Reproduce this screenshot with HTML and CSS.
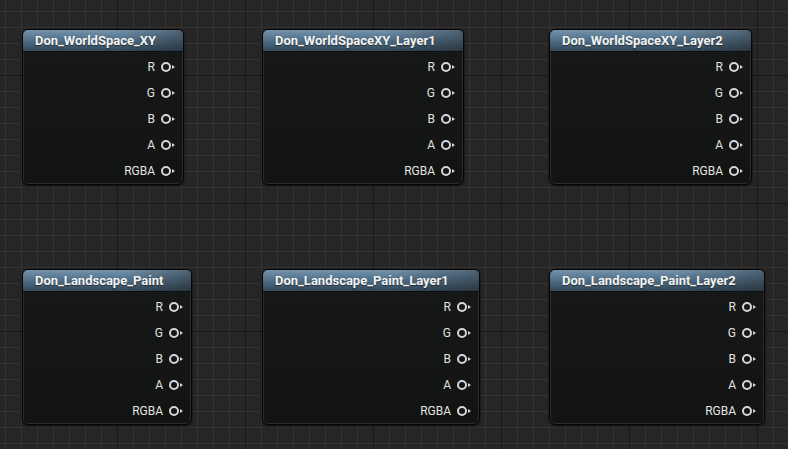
FILE: index.html
```html
<!DOCTYPE html>
<html lang="en">
<head>
    <meta charset="UTF-8">
    <title>Material Graph</title>
    <link rel="stylesheet" href="styles.css">
</head>
<body>
    <div class="graph">
        <div class="node node-1">
            <div class="node-title">Don_WorldSpace_XY</div>
            <div class="pins">
                <div class="pin"><span>R</span><i class="pin-dot"></i></div>
                <div class="pin"><span>G</span><i class="pin-dot"></i></div>
                <div class="pin"><span>B</span><i class="pin-dot"></i></div>
                <div class="pin"><span>A</span><i class="pin-dot"></i></div>
                <div class="pin"><span>RGBA</span><i class="pin-dot"></i></div>
            </div>
        </div>
        <div class="node node-2">
            <div class="node-title">Don_WorldSpaceXY_Layer1</div>
            <div class="pins">
                <div class="pin"><span>R</span><i class="pin-dot"></i></div>
                <div class="pin"><span>G</span><i class="pin-dot"></i></div>
                <div class="pin"><span>B</span><i class="pin-dot"></i></div>
                <div class="pin"><span>A</span><i class="pin-dot"></i></div>
                <div class="pin"><span>RGBA</span><i class="pin-dot"></i></div>
            </div>
        </div>
        <div class="node node-3">
            <div class="node-title">Don_WorldSpaceXY_Layer2</div>
            <div class="pins">
                <div class="pin"><span>R</span><i class="pin-dot"></i></div>
                <div class="pin"><span>G</span><i class="pin-dot"></i></div>
                <div class="pin"><span>B</span><i class="pin-dot"></i></div>
                <div class="pin"><span>A</span><i class="pin-dot"></i></div>
                <div class="pin"><span>RGBA</span><i class="pin-dot"></i></div>
            </div>
        </div>
        <div class="node node-4">
            <div class="node-title">Don_Landscape_Paint</div>
            <div class="pins">
                <div class="pin"><span>R</span><i class="pin-dot"></i></div>
                <div class="pin"><span>G</span><i class="pin-dot"></i></div>
                <div class="pin"><span>B</span><i class="pin-dot"></i></div>
                <div class="pin"><span>A</span><i class="pin-dot"></i></div>
                <div class="pin"><span>RGBA</span><i class="pin-dot"></i></div>
            </div>
        </div>
        <div class="node node-5">
            <div class="node-title">Don_Landscape_Paint_Layer1</div>
            <div class="pins">
                <div class="pin"><span>R</span><i class="pin-dot"></i></div>
                <div class="pin"><span>G</span><i class="pin-dot"></i></div>
                <div class="pin"><span>B</span><i class="pin-dot"></i></div>
                <div class="pin"><span>A</span><i class="pin-dot"></i></div>
                <div class="pin"><span>RGBA</span><i class="pin-dot"></i></div>
            </div>
        </div>
        <div class="node node-6">
            <div class="node-title">Don_Landscape_Paint_Layer2</div>
            <div class="pins">
                <div class="pin"><span>R</span><i class="pin-dot"></i></div>
                <div class="pin"><span>G</span><i class="pin-dot"></i></div>
                <div class="pin"><span>B</span><i class="pin-dot"></i></div>
                <div class="pin"><span>A</span><i class="pin-dot"></i></div>
                <div class="pin"><span>RGBA</span><i class="pin-dot"></i></div>
            </div>
        </div>
    </div>
</body>
</html>
```

FILE: styles.css
```css
body {
    margin: 0;
    font-family: Roboto, "Noto Sans", sans-serif;
    background-color: #262626;
    overflow: hidden;
}
.graph {
    position: relative;
    width: 788px;
    height: 449px;
    background-color: #262626;
    background-image:
        linear-gradient(to right, #191919 1px, transparent 1px),
        linear-gradient(to bottom, #191919 1px, transparent 1px),
        linear-gradient(to right, #333333 1px, transparent 1px),
        linear-gradient(to bottom, #333333 1px, transparent 1px);
    background-size: 128px 128px, 128px 128px, 16px 16px, 16px 16px;
    background-position: 117px 0, 0 75px, 5px 0, 0 11px;
}

/* graph nodes */
.node {
    position: absolute;
    top: 29px;
    height: 156px;
    box-sizing: border-box;
    display: flex;
    flex-direction: column;
    background: linear-gradient(to bottom, #171918, #121413);
    border: 1px solid #050505;
    border-radius: 6px;
    box-shadow: 0 1px 3px rgba(0, 0, 0, 0.6), inset 0 0 0 1px #2a2c2b;
    overflow: hidden;
}
.node-1 { left: 22px; width: 162px; }
.node-2 { left: 262px; width: 202px; }
.node-3 { left: 549px; width: 203px; }
.node-4 { left: 22px; top: 269px; width: 170px; }
.node-5 { left: 262px; top: 269px; width: 218px; }
.node-6 { left: 549px; top: 269px; width: 216px; }

.node-title {
    height: 22px;
    line-height: 21px;
    padding-left: 12px;
    color: #f2f2f2;
    font-size: 13px;
    font-weight: bold;
    text-shadow: 0 1px 1px rgba(0, 0, 0, 0.5);
    background:
        linear-gradient(to right, rgba(30, 32, 34, 0) 60%, rgba(30, 32, 34, 0.4)),
        linear-gradient(to bottom, #7393ad, #52718a 45%, #334757);
    border-bottom: 1px solid #0c0e10;
}
.pins {
    display: flex;
    flex-direction: column;
    padding-top: 2px;
}
.pin {
    height: 26px;
    display: flex;
    align-items: center;
    justify-content: flex-end;
    gap: 6px;
    padding-right: 8px;
    color: #e2e2e2;
    font-size: 12px;
}
.pin-dot {
    position: relative;
    width: 6px;
    height: 6px;
    border: 2px solid #d6d6d6;
    border-radius: 50%;
    margin-right: 4px;
}
.pin-dot::after {
    content: "";
    position: absolute;
    left: 9px;
    top: 0.5px;
    border-left: 3px solid #d6d6d6;
    border-top: 2.5px solid transparent;
    border-bottom: 2.5px solid transparent;
}
```
